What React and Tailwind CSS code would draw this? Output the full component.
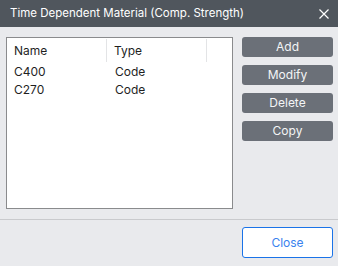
export default function App() {
  const rows = [
    { name: 'C400', type: 'Code' },
    { name: 'C270', type: 'Code' },
  ];
  const actions = ['Add', 'Modify', 'Delete', 'Copy'];

  return (
    <div
      className="w-[338px] h-[266px] flex flex-col bg-[#e9eaed] text-[12px] text-[#1f1f1f] overflow-hidden"
      style={{ fontFamily: 'Inter, "Noto Sans", sans-serif' }}
    >
      {/* Title bar */}
      <div className="h-[27px] shrink-0 flex items-center justify-between pl-[10px] pr-[9px] bg-[#50565d] text-white">
        <span className="text-[11.5px] leading-none">Time Dependent Material (Comp. Strength)</span>
        <svg width="10" height="10" viewBox="0 0 10 10" className="text-white">
          <path d="M0.5 0.5L9.5 9.5M9.5 0.5L0.5 9.5" stroke="currentColor" strokeWidth="1.2" />
        </svg>
      </div>

      {/* Body */}
      <div className="flex pt-[10px] pl-[6px] pr-[5px]">
        <div className="w-[227px] h-[172px] bg-white border border-[#8a8b8d]">
          <div className="flex h-[25px] items-center">
            <div className="w-[100px] h-[23px] flex items-center pl-[7px] border-r border-[#e3e4e6]">Name</div>
            <div className="w-[100px] h-[23px] flex items-center pl-[7px] border-r border-[#e3e4e6]">Type</div>
          </div>
          {rows.map((r) => (
            <div key={r.name} className="flex h-[18px] items-center">
              <div className="w-[100px] pl-[7px]">{r.name}</div>
              <div className="w-[100px] pl-[8px]">{r.type}</div>
            </div>
          ))}
        </div>
        <div className="ml-[9px] w-[91px] flex flex-col gap-[8px]">
          {actions.map((a) => (
            <button
              key={a}
              className="h-[20px] rounded-[3px] bg-[#6b7078] text-[#f4f5f6] text-[12px] leading-none"
            >
              {a}
            </button>
          ))}
        </div>
      </div>

      {/* Footer */}
      <div className="mt-[10px] border-t border-[#c9cacd] flex justify-end pt-[7px] pr-[5px]">
        <button className="w-[91px] h-[31px] rounded-[3px] border border-[#1a73e8] bg-white text-[#3a82ee] text-[12px]">
          Close
        </button>
      </div>
    </div>
  );
}
